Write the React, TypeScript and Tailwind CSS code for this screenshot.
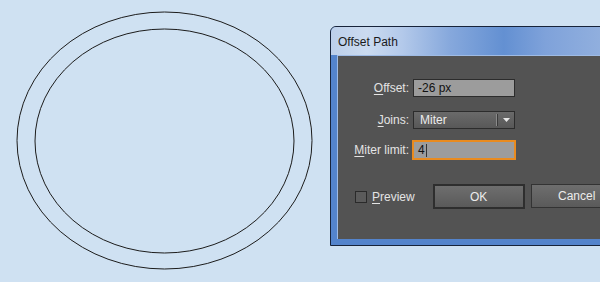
function Rings() {
  return (
    <svg width="330" height="282" viewBox="0 0 330 282" className="shrink-0">
      <ellipse cx="164.5" cy="140.5" rx="147.5" ry="128.5" fill="none" stroke="#1c1c1c" strokeWidth="1" />
      <ellipse cx="164.5" cy="141" rx="129.5" ry="112" fill="none" stroke="#1c1c1c" strokeWidth="1" />
    </svg>
  );
}

function Label({ k, rest }: { k: string; rest: string }) {
  return (
    <span className="w-[71px] shrink-0 text-right text-[12px] text-[#e4e4e4]">
      <span className="underline underline-offset-2">{k}</span>
      {rest}
    </span>
  );
}

export default function App() {
  return (
    <div className="flex h-[282px] w-[600px] overflow-hidden bg-[#cfe1f2] font-['Liberation_Sans',Arial,sans-serif]">
      <Rings />

      <div className="mt-[26px] flex h-[220px] w-[300px] shrink-0 flex-col rounded-tl-[6px] border border-[#17233a] bg-[#5484cc]">
        {/* title bar */}
        <div className="flex h-[28px] items-center rounded-tl-[5px] bg-[linear-gradient(90deg,#bccfea_0%,#cbdbf0_12%,#b3c9ea_24%,#86a8dc_40%,#6390d2_58%,#7fa2da_72%,#9ab6e0_100%)] pl-[7px] pt-[1px] text-[12px] text-[#1a1a1a]">
          Offset Path
        </div>

        {/* body */}
        <div className="ml-[6px] flex h-[184px] flex-col border-l border-t border-[#9fbbe4] bg-[#535353] pt-[23px]">
          <div className="flex h-[18px] items-center gap-[4px]">
            <Label k="O" rest="ffset:" />
            <div className="flex h-[18px] w-[102px] items-center border border-[#2c2c2c] bg-[#9c9c9c] pl-[4px] text-[12px] text-[#111]">
              -26 px
            </div>
          </div>

          <div className="mt-[14px] flex h-[18px] items-center gap-[4px]">
            <Label k="J" rest="oins:" />
            <div className="flex h-[18px] w-[102px] items-center border border-[#2c2c2c] bg-[linear-gradient(180deg,#6a6a6a,#585858)] text-[12px] text-[#ececec]">
              <span className="flex-1 pl-[6px]">Miter</span>
              <span className="h-[12px] w-[2px] border-l border-r border-l-[#8a8a8a] border-r-[#3a3a3a]" />
              <span className="flex w-[16px] justify-center">
                <svg width="7" height="4" viewBox="0 0 7 4">
                  <path d="M0 0h7L3.5 4z" fill="#e6e6e6" />
                </svg>
              </span>
            </div>
          </div>

          <div className="mt-[11px] flex h-[20px] items-center gap-[3px]">
            <Label k="M" rest="iter limit:" />
            <div className="flex h-[20px] w-[104px] items-center border-2 border-[#e98b1f] bg-[#9c9c9c] pl-[4px] text-[12px] text-[#111]">
              4<span className="ml-[1px] h-[13px] w-px bg-[#333]" />
            </div>
          </div>

          <div className="mt-[24px] flex items-start">
            <div className="ml-[17px] mt-[4px] flex items-center">
              <span className="h-[12px] w-[12px] border border-[#2a2a2a] bg-[#5b5b5b]" />
              <span className="ml-[5px] text-[12px] text-[#e4e4e4]">
                <span className="underline underline-offset-2">P</span>review
              </span>
            </div>
            <button className="ml-[18px] flex h-[25px] w-[92px] shrink-0 items-center justify-center border-2 border-[#2e2e2e] bg-[linear-gradient(180deg,#6e6e6e,#5a5a5a)] text-[12px] text-[#ececec]">
              OK
            </button>
            <button className="ml-[6px] flex h-[24px] w-[92px] shrink-0 items-center justify-center border border-[#333] bg-[linear-gradient(180deg,#6e6e6e,#5a5a5a)] text-[12px] text-[#ececec]">
              Cancel
            </button>
          </div>
        </div>
      </div>
    </div>
  );
}
